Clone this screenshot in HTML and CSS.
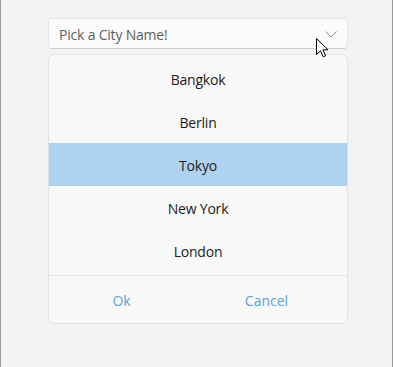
FILE: index.html
```html
<!DOCTYPE html>
<html lang="en">
<head>
  <meta charset="UTF-8" />
  <title>City Picker</title>
  <link rel="stylesheet" href="styles.css">
</head>
<body>
  <div class="window">
    <div class="combo">
      <span class="placeholder">Pick a City Name!</span>
      <svg class="chevron" width="12" height="7" viewBox="0 0 12 7">
        <path d="M0.5 0.5 L6 6 L11.5 0.5" fill="none" stroke="#8c8c8c" stroke-width="1" />
      </svg>
    </div>

    <div class="popup">
      <ul class="cities">
        <li>Bangkok</li>
        <li>Berlin</li>
        <li class="selected">Tokyo</li>
        <li>New York</li>
        <li>London</li>
      </ul>
      <div class="actions">
        <button>Ok</button>
        <button>Cancel</button>
      </div>
    </div>

    <!-- mouse pointer over the combo -->
    <svg class="pointer" width="13" height="20" viewBox="0 0 13 20">
      <path d="M0.5 0.5 L0.5 16.5 L4.5 12.8 L7.2 18.8 L9.6 17.8 L6.9 11.8 L12 11.8 Z" fill="#fff" stroke="#000" stroke-width="1" stroke-linejoin="miter" />
    </svg>
  </div>
</body>
</html>
```

FILE: styles.css
```css
body {
  margin: 0;
  background: #f3f3f3;
  font-family: 'Open Sans', 'Noto Sans', sans-serif;
  font-size: 14px;
  letter-spacing: -0.2px;
}

.window {
  position: relative;
  height: 367px;
  box-sizing: border-box;
  border-left: 1px solid #9a9a9a;
  border-right: 1px solid #9a9a9a;
  padding: 18px 44px 0 47px;
}

.combo {
  width: 300px;
  height: 31px;
  box-sizing: border-box;
  display: flex;
  align-items: center;
  justify-content: space-between;
  padding: 1px 10px 0 10px;
  background: #fbfbfb;
  border: 1px solid #e5e5e5;
  border-bottom-color: #cfcfcf;
  border-radius: 4px;
}

.placeholder {
  color: #606060;
}

.popup {
  width: 300px;
  box-sizing: border-box;
  margin-top: 5px;
  background: #f9f9f9;
  border: 1px solid #e3e3e3;
  border-radius: 7px;
  overflow: hidden;
}

.cities {
  list-style: none;
  margin: 0;
  padding: 2px 0 3px;
}

.cities li {
  height: 43px;
  box-sizing: border-box;
  padding-top: 2px;
  display: flex;
  align-items: center;
  justify-content: center;
  color: #1b1b1b;
}

.cities li.selected {
  background: #aed2f0;
}

.actions {
  display: grid;
  grid-template-columns: 1fr 1fr;
  height: 47px;
  padding-right: 8px;
  border-top: 1px solid #e5e5e5;
}

.actions button {
  border: none;
  background: none;
  font: inherit;
  padding-top: 2px;
  color: #5aa0dd;
  cursor: pointer;
}

.pointer {
  position: absolute;
  left: 315px;
  top: 38px;
}
```
